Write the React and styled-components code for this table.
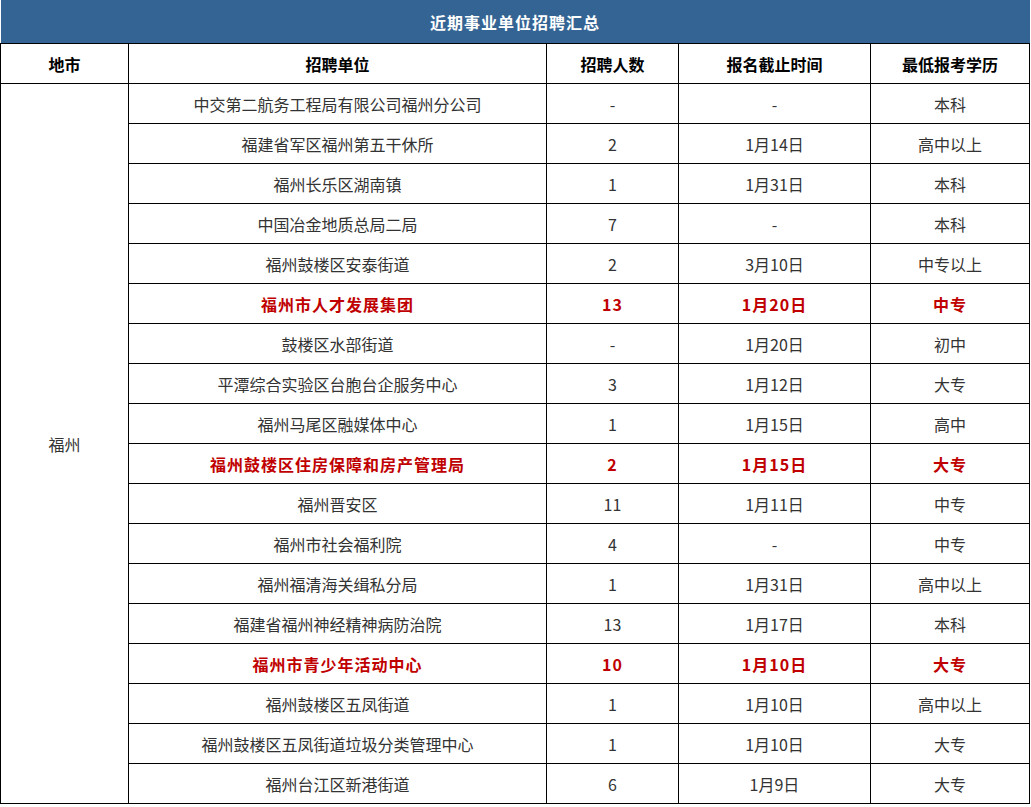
import React from "react";
import styled, { createGlobalStyle } from "styled-components";

const GlobalStyle = createGlobalStyle`
  html, body {
    margin: 0;
    padding: 0;
    background: #fff;
  }
  body {
    font-family: "Noto Sans CJK SC", "Liberation Sans", sans-serif;
  }
`;

const Table = styled.table`
  width: 1029px;
  border-collapse: collapse;
  table-layout: fixed;
  font-size: 16px;
  color: #333;

  td,
  th {
    border: 1px solid #000;
    text-align: center;
    padding: 0;
    line-height: 20px;
  }
`;

const TitleCell = styled.th`
  height: 43px;
  background: #346493;
  color: #fff;
  font-size: 16px;
  font-weight: 700;
  letter-spacing: 1px;
  && {
    border: none;
    border-bottom: 1px solid #000;
  }
`;

const HeadCell = styled.th`
  height: 39px;
  font-weight: 700;
  color: #000;
`;

const Cell = styled.td`
  height: 39px;
  color: ${({ $hot }) => ($hot ? "#c00000" : "#333")};
  font-weight: ${({ $hot }) => ($hot ? 700 : 400)};
  letter-spacing: ${({ $hot }) => ($hot ? "1px" : "0")};
`;

const CityCell = styled.td`
  color: #333;
`;

const rows = [
  ["中交第二航务工程局有限公司福州分公司", "-", "-", "本科"],
  ["福建省军区福州第五干休所", "2", "1月14日", "高中以上"],
  ["福州长乐区湖南镇", "1", "1月31日", "本科"],
  ["中国冶金地质总局二局", "7", "-", "本科"],
  ["福州鼓楼区安泰街道", "2", "3月10日", "中专以上"],
  ["福州市人才发展集团", "13", "1月20日", "中专", true],
  ["鼓楼区水部街道", "-", "1月20日", "初中"],
  ["平潭综合实验区台胞台企服务中心", "3", "1月12日", "大专"],
  ["福州马尾区融媒体中心", "1", "1月15日", "高中"],
  ["福州鼓楼区住房保障和房产管理局", "2", "1月15日", "大专", true],
  ["福州晋安区", "11", "1月11日", "中专"],
  ["福州市社会福利院", "4", "-", "中专"],
  ["福州福清海关缉私分局", "1", "1月31日", "高中以上"],
  ["福建省福州神经精神病防治院", "13", "1月17日", "本科"],
  ["福州市青少年活动中心", "10", "1月10日", "大专", true],
  ["福州鼓楼区五凤街道", "1", "1月10日", "高中以上"],
  ["福州鼓楼区五凤街道垃圾分类管理中心", "1", "1月10日", "大专"],
  ["福州台江区新港街道", "6", "1月9日", "大专"],
];

export default function App() {
  return (
    <>
      <GlobalStyle />
      <Table>
        <colgroup>
          <col style={{ width: 128 }} />
          <col style={{ width: 418 }} />
          <col style={{ width: 132 }} />
          <col style={{ width: 192 }} />
          <col style={{ width: 159 }} />
        </colgroup>
        <thead>
          <tr>
            <TitleCell colSpan={5}>近期事业单位招聘汇总</TitleCell>
          </tr>
          <tr>
            <HeadCell>地市</HeadCell>
            <HeadCell>招聘单位</HeadCell>
            <HeadCell>招聘人数</HeadCell>
            <HeadCell>报名截止时间</HeadCell>
            <HeadCell>最低报考学历</HeadCell>
          </tr>
        </thead>
        <tbody>
          {rows.map(([unit, num, date, edu, hot], i) => (
            <tr key={unit}>
              {i === 0 && <CityCell rowSpan={rows.length}>福州</CityCell>}
              <Cell $hot={hot}>{unit}</Cell>
              <Cell $hot={hot}>{num}</Cell>
              <Cell $hot={hot}>{date}</Cell>
              <Cell $hot={hot}>{edu}</Cell>
            </tr>
          ))}
        </tbody>
      </Table>
    </>
  );
}
